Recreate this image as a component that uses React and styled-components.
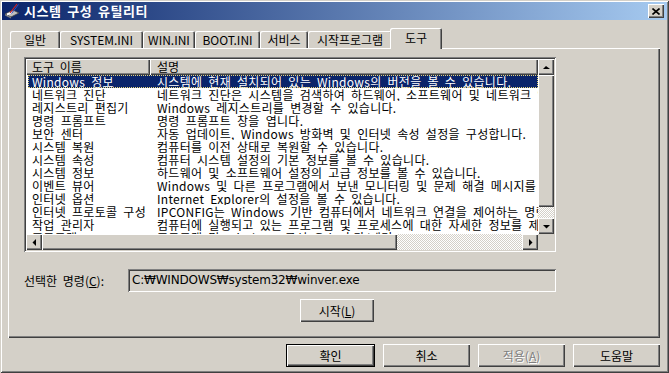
import React from 'react';
import styled, { createGlobalStyle, css } from 'styled-components';

const FACE = '#D4D0C8';
const SHADOW = '#808080';
const DARK = '#404040';
const NAVY = '#0A246A';
const FONT = '"Noto Sans CJK KR", "DejaVu Sans", sans-serif';

const GlobalStyle = createGlobalStyle`
  html, body {
    margin: 0;
    padding: 0;
    background: ${FACE};
  }
  body {
    font-family: ${FONT};
    font-size: 12px;
    color: #000;
  }
`;

const raised = css`
  box-shadow: inset 1px 1px #fff, inset -1px -1px ${DARK}, inset -2px -2px ${SHADOW};
`;

const sunken = css`
  box-shadow: inset 1px 1px ${SHADOW}, inset -1px -1px #fff, inset 2px 2px ${DARK}, inset -2px -2px ${FACE};
`;

const checkered = css`
  background-color: ${FACE};
  background-image: conic-gradient(#fff 25%, ${FACE} 0 50%, #fff 0 75%, ${FACE} 0);
  background-size: 2px 2px;
`;

const Window = styled.div`
  width: 669px;
  height: 373px;
  box-sizing: border-box;
  padding: 2px;
  background: ${FACE};
  box-shadow: inset 1px 1px ${FACE}, inset -1px -1px ${DARK}, inset 2px 2px #fff, inset -2px -2px ${SHADOW};
  display: flex;
  flex-direction: column;
  overflow: hidden;
`;

const TitleBar = styled.div`
  height: 18px;
  display: flex;
  align-items: center;
  padding: 0 3px 0 2px;
  background: linear-gradient(to right, ${NAVY}, #A6CAF0);
`;

const TitleIcon = styled.svg`
  width: 16px;
  height: 16px;
  flex: none;
`;

const TitleText = styled.span`
  margin-left: 4px;
  color: #fff;
  font-weight: 700;
  font-size: 13px;
  line-height: 18px;
  letter-spacing: 0.6px;
  word-spacing: 2px;
  flex: 1;
`;

const CloseButton = styled.div`
  width: 16px;
  height: 14px;
  background: ${FACE};
  ${raised};
  display: flex;
  align-items: center;
  justify-content: center;
`;

const Body = styled.div`
  flex: 1;
  display: flex;
  flex-direction: column;
  padding: 8px 7px 0 6px;
`;

const TabStrip = styled.div`
  display: flex;
  align-items: flex-end;
  padding-left: 2px;
  height: 20px;
  position: relative;
  z-index: 1;
`;

const Tab = styled.div`
  box-sizing: border-box;
  width: ${(p) => p.$w}px;
  height: ${(p) => (p.$active ? 21 : 17)}px;
  margin: ${(p) => (p.$active ? '0 -2px -1px -2px' : '0')};
  padding-top: ${(p) => (p.$active ? 2 : 1)}px;
  background: ${FACE};
  border-top-left-radius: 2px;
  border-top-right-radius: 2px;
  box-shadow: inset 1px 1px #fff, inset -1px 0 ${DARK}, inset -2px 0 ${SHADOW};
  text-align: center;
  line-height: 15px;
  white-space: nowrap;
  word-spacing: 2px;
`;

const Panel = styled.div`
  height: 290px;
  box-sizing: border-box;
  padding: 9px 0 0 16px;
  ${raised};
`;

const ListView = styled.div`
  width: 532px;
  height: 195px;
  box-sizing: border-box;
  padding: 2px;
  ${sunken};
  background: #fff;
  display: grid;
  grid-template-columns: 512px 16px;
  grid-template-rows: 175px 16px;
`;

const ListMain = styled.div`
  overflow: hidden;
  display: flex;
  flex-direction: column;
`;

const HeaderRow = styled.div`
  display: grid;
  grid-template-columns: 124px 1fr;
  height: 16px;
  flex: none;
`;

const HeaderCell = styled.div`
  background: ${FACE};
  box-shadow: inset 1px 1px #fff, inset -1px -1px ${DARK}, inset -2px -2px ${SHADOW};
  padding-left: ${(p) => p.$pad}px;
  line-height: 16px;
  word-spacing: 3px;
  white-space: nowrap;
`;

const Row = styled.div`
  display: grid;
  grid-template-columns: 122px 1fr;
  margin-left: 2px;
  height: 13px;
  line-height: 13px;
  white-space: nowrap;
  word-spacing: 3px;
  letter-spacing: 0.3px;
  flex: none;
  ${(p) =>
    p.$selected &&
    css`
      background: ${NAVY};
      color: #fff;
      outline: 1px dotted #e4d47c;
      outline-offset: -1px;
    `}
`;

const Cell = styled.div`
  padding-left: ${(p) => p.$pad}px;
  overflow: hidden;
`;

const VScroll = styled.div`
  display: flex;
  flex-direction: column;
  ${checkered};
`;

const HScroll = styled.div`
  display: flex;
  ${checkered};
`;

const ArrowButton = styled.div`
  width: 16px;
  height: 16px;
  flex: none;
  background: ${FACE};
  box-shadow: inset 1px 1px #fff, inset -1px -1px ${DARK}, inset -2px -2px ${SHADOW};
  display: flex;
  align-items: center;
  justify-content: center;
`;

const Thumb = styled.div`
  flex: none;
  background: ${FACE};
  box-shadow: inset 1px 1px #fff, inset -1px -1px ${DARK}, inset -2px -2px ${SHADOW};
`;

const Spacer = styled.div`
  flex: 1;
`;

const Corner = styled.div`
  background: ${FACE};
`;

const CommandRow = styled.div`
  display: flex;
  align-items: center;
  margin-top: 17px;
  width: 532px;
`;

const Label = styled.div`
  width: 104px;
  word-spacing: 3px;
`;

const Field = styled.div`
  flex: 1;
  height: 23px;
  box-sizing: border-box;
  padding: 2px 4px;
  ${sunken};
  line-height: 18px;
  font-family: "DejaVu Sans", "Noto Sans CJK KR", sans-serif;
  font-size: 12px;
  letter-spacing: -0.2px;
`;

const ActionRow = styled.div`
  padding: 7px 0 0 276px;
`;

const Button = styled.div`
  box-sizing: border-box;
  width: ${(p) => p.$w || 87}px;
  height: 23px;
  background: ${FACE};
  ${raised};
  display: flex;
  align-items: center;
  justify-content: center;
  word-spacing: 3px;
  ${(p) =>
    p.$default &&
    css`
      border: 1px solid #000;
      box-shadow: inset 1px 1px #fff, inset -1px -1px ${DARK}, inset -2px -2px ${SHADOW};
    `}
  ${(p) =>
    p.$disabled &&
    css`
      color: ${SHADOW};
      text-shadow: 1px 1px #fff;
    `}
`;

const Mnemonic = styled.u`
  text-underline-offset: 1px;
`;

const ButtonRow = styled.div`
  display: flex;
  justify-content: flex-end;
  gap: 8px;
  margin-top: 6px;
`;

const Arrow = ({ dir }) => {
  const pts = {
    up: '4,2 1,5 8,5',
    down: '1,2 8,2 4.5,5.5',
    left: '5,1 5,8 1.5,4.5',
    right: '2,1 2,8 5.5,4.5',
  }[dir];
  const vert = dir === 'up' || dir === 'down';
  return (
    <svg width={vert ? 9 : 7} height={vert ? 7 : 9} viewBox={vert ? '0 0 9 7' : '0 0 7 9'}>
      <polygon points={pts} fill="#000" />
    </svg>
  );
};

const tabs = [
  { label: '일반', w: 50 },
  { label: 'SYSTEM.INI', w: 83 },
  { label: 'WIN.INI', w: 52 },
  { label: 'BOOT.INI', w: 65 },
  { label: '서비스', w: 48 },
  { label: '시작프로그램', w: 84 },
  { label: '도구', w: 52, active: true },
];

const tools = [
  ['Windows 정보', '시스템에 현재 설치되어 있는 Windows의 버전을 볼 수 있습니다.'],
  ['네트워크 진단', '네트워크 진단은 시스템을 검색하여 하드웨어, 소프트웨어 및 네트워크 연결에 대한 정보를 수집합니다.'],
  ['레지스트리 편집기', 'Windows 레지스트리를 변경할 수 있습니다.'],
  ['명령 프롬프트', '명령 프롬프트 창을 엽니다.'],
  ['보안 센터', '자동 업데이트, Windows 방화벽 및 인터넷 속성 설정을 구성합니다.'],
  ['시스템 복원', '컴퓨터를 이전 상태로 복원할 수 있습니다.'],
  ['시스템 속성', '컴퓨터 시스템 설정의 기본 정보를 볼 수 있습니다.'],
  ['시스템 정보', '하드웨어 및 소프트웨어 설정의 고급 정보를 볼 수 있습니다.'],
  ['이벤트 뷰어', 'Windows 및 다른 프로그램에서 보낸 모니터링 및 문제 해결 메시지를 표시합니다.'],
  ['인터넷 옵션', 'Internet Explorer의 설정을 볼 수 있습니다.'],
  ['인터넷 프로토콜 구성', 'IPCONFIG는 Windows 기반 컴퓨터에서 네트워크 연결을 제어하는 명령줄 도구입니다.'],
  ['작업 관리자', '컴퓨터에 실행되고 있는 프로그램 및 프로세스에 대한 자세한 정보를 제공합니다.'],
  ['프로그램', '프로그램 및 Windows 구성 요소 추가/제거'],
];

export default function App() {
  return (
    <>
      <GlobalStyle />
      <Window>
        <TitleBar>
          <TitleIcon viewBox="0 0 16 16">
            <polygon points="1,11 9,7 15,10 7,14" fill="#c0c0c0" stroke="#404040" strokeWidth="0.8" />
            <polygon points="1,11 7,14 7,15.5 1,12.5" fill="#808080" />
            <rect x="3" y="9" width="5" height="2" fill="#fff" transform="skewY(-25) translate(0 3)" />
            <line x1="6" y1="10" x2="13" y2="1" stroke="#d02020" strokeWidth="1.2" />
            <line x1="7.5" y1="10.5" x2="14.5" y2="1.5" stroke="#3050c0" strokeWidth="1" />
          </TitleIcon>
          <TitleText>시스템 구성 유틸리티</TitleText>
          <CloseButton>
            <svg width="8" height="7" viewBox="0 0 8 7">
              <path d="M0.5 0.5 L7.5 6.5 M7.5 0.5 L0.5 6.5" stroke="#000" strokeWidth="1.6" />
            </svg>
          </CloseButton>
        </TitleBar>
        <Body>
          <TabStrip>
            {tabs.map((t) => (
              <Tab key={t.label} $w={t.w} $active={t.active}>
                {t.label}
              </Tab>
            ))}
          </TabStrip>
          <Panel>
            <ListView>
              <ListMain>
                <HeaderRow>
                  <HeaderCell $pad={6}>도구 이름</HeaderCell>
                  <HeaderCell $pad={7}>설명</HeaderCell>
                </HeaderRow>
                {tools.map(([name, desc], i) => (
                  <Row key={name} $selected={i === 0}>
                    <Cell $pad={4}>{name}</Cell>
                    <Cell $pad={7}>{desc}</Cell>
                  </Row>
                ))}
              </ListMain>
              <VScroll>
                <ArrowButton>
                  <Arrow dir="up" />
                </ArrowButton>
                <Thumb style={{ height: 132 }} />
                <Spacer />
                <ArrowButton>
                  <Arrow dir="down" />
                </ArrowButton>
              </VScroll>
              <HScroll>
                <ArrowButton>
                  <Arrow dir="left" />
                </ArrowButton>
                <Thumb style={{ width: 355 }} />
                <Spacer />
                <ArrowButton>
                  <Arrow dir="right" />
                </ArrowButton>
              </HScroll>
              <Corner />
            </ListView>
            <CommandRow>
              <Label>
                선택한 명령(<Mnemonic>C</Mnemonic>):
              </Label>
              <Field>C:₩WINDOWS₩system32₩winver.exe</Field>
            </CommandRow>
            <ActionRow>
              <Button $w={74}>
                시작(<Mnemonic>L</Mnemonic>)
              </Button>
            </ActionRow>
          </Panel>
          <ButtonRow>
            <Button $default $w={89}>확인</Button>
            <Button>취소</Button>
            <Button $disabled>
              적용(<Mnemonic>A</Mnemonic>)
            </Button>
            <Button>도움말</Button>
          </ButtonRow>
        </Body>
      </Window>
    </>
  );
}
